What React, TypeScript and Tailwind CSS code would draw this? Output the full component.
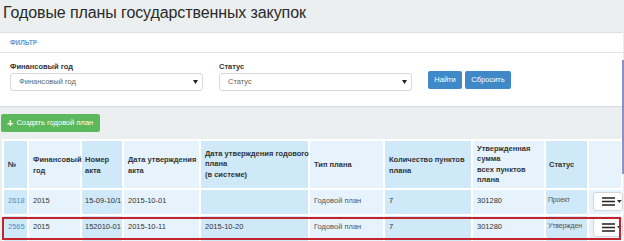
import React from "react";

type Row = {
  id: string;
  year: string;
  act: string;
  actDate: string;
  planDate: string;
  type: string;
  count: string;
  sum: string;
  status: string;
};

const rows: Row[] = [
  {
    id: "2618",
    year: "2015",
    act: "15-09-10/1",
    actDate: "2015-10-01",
    planDate: "",
    type: "Годовой план",
    count: "7",
    sum: "301280",
    status: "Проект",
  },
  {
    id: "2565",
    year: "2015",
    act: "152010-01",
    actDate: "2015-10-11",
    planDate: "2015-10-20",
    type: "Годовой план",
    count: "7",
    sum: "301280",
    status: "Утвержден",
  },
];

const dark = "bg-[#d0e9f8]";
const light = "bg-[#e6f3fc]";

function MenuButton() {
  return (
    <div className="flex h-[19px] w-[30px] items-center gap-[2px] rounded-[3px] border border-[#d6d6d6] bg-white pl-[8px]">
      <svg width="14" height="9" viewBox="0 0 14 9">
        <rect x="0" y="0" width="14" height="1.6" fill="#222" />
        <rect x="0" y="3.7" width="14" height="1.6" fill="#222" />
        <rect x="0" y="7.4" width="14" height="1.6" fill="#222" />
      </svg>
      <svg width="5" height="3" viewBox="0 0 5 3">
        <path d="M0 0h5L2.5 3z" fill="#333" />
      </svg>
    </div>
  );
}

function Caret() {
  return (
    <svg width="5" height="4" viewBox="0 0 5 4">
      <path d="M0 0h5L2.5 4z" fill="#222" />
    </svg>
  );
}

export default function App() {
  return (
    <div
      className="relative h-[241px] w-[624px] overflow-hidden bg-[#ebeff0] text-[#333]"
      style={{ fontFamily: '"Liberation Sans", Arial, sans-serif' }}
    >
      {/* Title */}
      <div className="h-[32px] whitespace-nowrap pl-[3px] pt-[1px] text-[16px] leading-[24px] tracking-[-0.1px] text-[#2a2a2a]">
        Годовые планы государственных закупок
      </div>

      {/* Filter panel */}
      <div className="mr-[1px] border-t border-[#dde1e3] bg-white shadow-[0_1px_1px_#dcdfe1]">
        <div className="flex h-[20px] items-center border-b border-[#e3e6e8] pl-[10px] text-[6.5px] font-bold text-[#5b9bd5]">
          ФИЛЬТР
        </div>
        <div className="flex h-[53px] items-start gap-[16px] px-[10px] pt-[9px] text-[7.5px]">
          <div className="flex w-[193px] flex-col">
            <div className="h-[10px] font-bold leading-[10px] text-[#333]">Финансовый год</div>
            <div className="mt-[1px] flex h-[18px] items-center justify-between rounded-[3px] border border-[#d9d9d9] pl-[8px] pr-[4px] text-[#666]">
              <span>Финансовый год</span>
              <Caret />
            </div>
          </div>
          <div className="flex w-[193px] flex-col">
            <div className="h-[10px] font-bold leading-[10px] text-[#333]">Статус</div>
            <div className="mt-[1px] flex h-[18px] items-center justify-between rounded-[3px] border border-[#d9d9d9] pl-[8px] pr-[4px] text-[#666]">
              <span>Статус</span>
              <Caret />
            </div>
          </div>
          <div className="flex gap-[3px] pt-[9px]">
            <div className="flex h-[18px] w-[34px] items-center justify-center rounded-[2px] bg-[#3f89c9] text-white">
              Найти
            </div>
            <div className="flex h-[18px] w-[46px] items-center justify-center rounded-[2px] bg-[#3f89c9] text-white">
              Сбросить
            </div>
          </div>
        </div>
      </div>

      {/* Create button */}
      <div className="pl-[1px] pt-[8px]">
        <div className="flex h-[18px] w-[99px] items-center gap-[3px] whitespace-nowrap rounded-[2px] bg-[#5cb85c] pl-[6px] text-[7.5px] text-white">
          <span className="text-[11px] font-bold leading-none">+</span>
          <span>Создать годовой план</span>
        </div>
      </div>

      {/* Table */}
      <div className="ml-[2px] mt-[7px] w-[621px] bg-white">
        <table className="w-[621px] table-fixed border-separate border-spacing-0.5 text-[7.5px]">
          <thead>
            <tr className="h-[47px] whitespace-nowrap text-left align-middle font-bold text-[#333]">
              <th className={`${dark} w-[23px] pl-[4px]`}>№</th>
              <th className={`${light} w-[51px] pl-[4px] leading-[11px]`}>
                Финансовый
                <br />
                год
              </th>
              <th className={`${dark} w-[40px] pl-[3px] leading-[11px]`}>
                Номер
                <br />
                акта
              </th>
              <th className={`${light} w-[75px] pl-[4px] leading-[11px]`}>
                Дата утверждения
                <br />
                акта
              </th>
              <th className={`${dark} w-[107px] pl-[4px] leading-[10.5px]`}>
                Дата утверждения годового
                <br />
                плана
                <br />
                (в системе)
              </th>
              <th className={`${light} w-[73px] pl-[4px]`}>Тип плана</th>
              <th className={`${dark} w-[86px] pl-[4px] leading-[11px]`}>
                Количество пунктов
                <br />
                плана
              </th>
              <th className={`${light} w-[71px] pl-[4px] leading-[10.5px]`}>
                Утвержденная
                <br />
                сумма
                <br />
                всех пунктов
                <br />
                плана
              </th>
              <th className={`${dark} w-[41px] pl-[3px]`}>Статус</th>
              <th className={`${light} w-[32px]`}></th>
            </tr>
          </thead>
          <tbody>
            {rows.map((r, i) => (
              <tr
                key={r.id}
                className={`${i === 0 ? "h-[24px]" : "h-[26px]"} whitespace-nowrap align-top text-[#333]`}
              >
                <td className={`${dark} pl-[4px] pt-[5px] text-[#4a8fcc]`}>{r.id}</td>
                <td className={`${light} pl-[4px] pt-[5px]`}>{r.year}</td>
                <td className={`${dark} pl-[3px] pt-[5px]`}>{r.act}</td>
                <td className={`${light} pl-[4px] pt-[5px]`}>{r.actDate}</td>
                <td className={`${dark} pl-[4px] pt-[5px]`}>{r.planDate}</td>
                <td className={`${light} pl-[4px] pt-[5px] text-[#555]`}>{r.type}</td>
                <td className={`${dark} pl-[4px] pt-[5px]`}>{r.count}</td>
                <td className={`${light} pl-[4px] pt-[5px]`}>{r.sum}</td>
                <td className={`${dark} pl-[2px] pt-[5px] text-[7px] tracking-[-0.2px] text-[#555]`}>{r.status}</td>
                <td className={`${light} pl-[4px] pt-[2px]`}>
                  <MenuButton />
                </td>
              </tr>
            ))}
          </tbody>
        </table>
      </div>

      {/* highlighted row annotation */}
      <div className="pointer-events-none absolute left-[2px] top-[217px] h-[23px] w-[619px] border-2 border-[#c3232b]" />

      {/* scrollbar edge */}
      <div className="absolute right-0 top-[60px] h-[114px] w-[2px] bg-[#8d92c6]" />
    </div>
  );
}
